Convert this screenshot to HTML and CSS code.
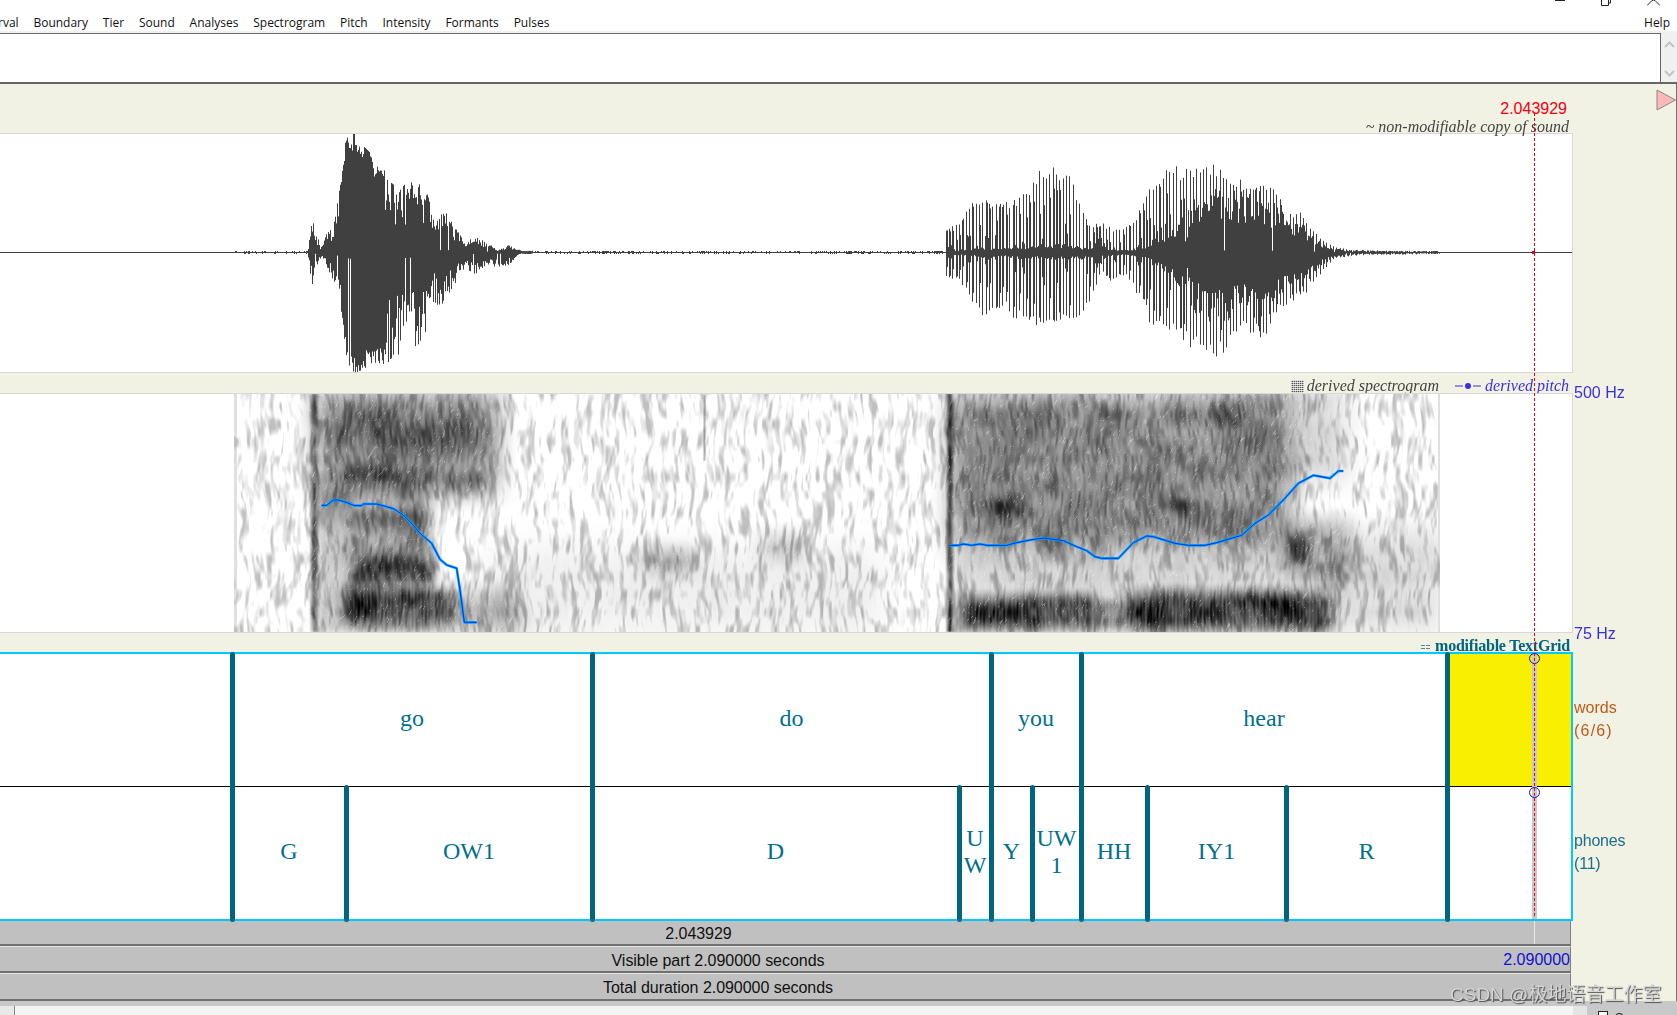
FILE: index.html
```html
<!DOCTYPE html>
<html lang="en">
<head>
<meta charset="utf-8">
<title>TextGrid editor</title>
<link rel="stylesheet" href="styles.css">
</head>
<body>
<div class="app">
  <div class="titlebar">
    <svg class="winicon" width="10" height="7" viewBox="0 0 10 7"><path d="M0 .5H10" /></svg>
    <svg class="winicon" width="10" height="7" viewBox="0 0 10 7"><path d="M.5 0V5.5H7.5V0M7.5 3H9.5V0" /></svg>
    <svg class="winicon" width="13" height="7" viewBox="0 0 13 7"><path d="M0 5.5L5 .5L6.500 0L8 .5L13 5.500" /></svg>
  </div>
  <nav class="menubar">
    <span>rval</span><span>Boundary</span><span>Tier</span><span>Sound</span><span>Analyses</span><span>Spectrogram</span><span>Pitch</span><span>Intensity</span><span>Formants</span><span>Pulses</span>
    <span class="help">Help</span>
  </nav>
  <div class="editbar">
    <div class="textbox"></div>
    <div class="vscroll">
      <svg width="11" height="7" viewBox="0 0 11 7"><path d="M1 6L5.500 1.500L10 6" /></svg>
      <svg width="11" height="7" viewBox="0 0 11 7"><path d="M1 1L5.500 5.500L10 1" /></svg>
    </div>
  </div>

  <main class="workspace">
    <header class="head">
      <div class="cursor-time">2.043929</div>
      <div class="caption dark">~ non-modifiable copy of sound</div>
    </header>
    <div class="side side-head">
      <svg width="20" height="22" viewBox="0 0 20 22"><polygon points="1,1 1,21 19.500,11" /></svg>
    </div>

    <section class="wave"><canvas id="wave" width="1572" height="238"></canvas></section>
    <div class="side"></div>

    <div class="band">
      <span class="caption dark"><i class="dither"></i>derived spectrogram</span>
      <span class="caption blue pitch-key"><svg width="26" height="8" viewBox="0 0 26 8"><path d="M0 4H8M18 4H26" /><circle cx="13" cy="4" r="3" /></svg>derived pitch</span>
    </div>
    <div class="side"></div>

    <section class="spec"><canvas id="spec" width="1572" height="238"></canvas></section>
    <div class="side side-hz"><span>500 Hz</span><span>75 Hz</span></div>

    <div class="band band-tg">
      <span class="caption teal"><svg class="tgicon" width="9" height="8" viewBox="0 0 9 8"><path d="M0 1.500H4M5 1.500H9M0 4.500H4M5 4.500H9" /></svg>modifiable TextGrid</span>
    </div>
    <div class="side"></div>

    <section class="grid">
      <div class="tier tier-words">
        <div class="iv first" style="width:232px"></div>
        <div class="iv" style="width:360px">go</div>
        <div class="iv" style="width:399px">do</div>
        <div class="iv" style="width:90px">you</div>
        <div class="iv" style="width:366px">hear</div>
        <div class="iv selected" style="width:124px"></div>
      </div>
      <div class="tier tier-phones">
        <div class="iv first" style="width:232px"></div>
        <div class="iv" style="width:114px">G</div>
        <div class="iv" style="width:246px">OW1</div>
        <div class="iv" style="width:367px">D</div>
        <div class="iv" style="width:32px">UW</div>
        <div class="iv" style="width:41px">Y</div>
        <div class="iv" style="width:49px">UW1</div>
        <div class="iv" style="width:66px">HH</div>
        <div class="iv" style="width:139px">IY1</div>
        <div class="iv" style="width:161px">R</div>
        <div class="iv" style="width:124px"></div>
      </div>
      <i class="cursor-band"></i>
      <i class="ring ring-a"></i>
      <i class="ring ring-b"></i>
    </section>
    <div class="side side-tiers">
      <div class="tier-label orange">words<br><span class="spaced">(6/6)</span></div>
      <div class="tier-label steel">phones<br>(11)</div>
    </div>

    <section class="panels">
      <div class="panel panel-cursor"><span>2.043929</span><i class="tick"></i></div>
      <div class="panel panel-mid"><span>Visible part 2.090000 seconds</span><b>2.090000</b></div>
      <div class="panel panel-mid panel-last"><span>Total duration 2.090000 seconds</span></div>
    </section>
    <div class="side"></div>

    <i class="cursor-line"></i>
  </main>

  <footer class="bottom">
    <div class="hscroll"><i class="hthumb"></i></div>
    <div class="controls">
      <i class="btn"></i>
      <label class="group"><i class="check"></i>Group</label>
    </div>
  </footer>

  <div class="watermark">CSDN @极地语音工作室</div>
</div>
<script src="script.js"></script>
</body>
</html>
```

FILE: styles.css
```css
* { box-sizing: border-box; }
html, body { margin: 0; padding: 0; background: #fff; }
body { width: 1677px; height: 1015px; overflow: hidden; font-family: "Liberation Sans", Arial, sans-serif; }
i { font-style: normal; display: block; }

.app { position: relative; width: 1677px; height: 1015px; display: flex; flex-direction: column; overflow: hidden; }

.titlebar { height: 7px; flex: none; display: flex; justify-content: flex-end; align-items: flex-start; gap: 36px; padding-right: 17px; background: #fff; }
.winicon { display: block; fill: none; stroke: #222; stroke-width: 1; }

.menubar { height: 24px; flex: none; display: flex; align-items: center; gap: 14.8px; padding-top: 6px; margin-left: -2px; font-family: "Open Sans", "Liberation Sans", sans-serif; font-size: 12px; color: #111; background: #fff; }
.menubar .help { margin-left: auto; margin-right: 7px; }

.editbar { height: 53px; flex: none; display: flex; padding-top: 2px; background: #f0f0f0; }
.textbox { width: 1661px; background: #fff; border-top: 1px solid #666; border-right: 1px solid #666; border-bottom: 2px solid #666; }
.vscroll { flex: 1; display: flex; flex-direction: column; justify-content: space-between; align-items: center; padding: 8px 0 5px; border-bottom: 2px solid #666; }
.vscroll path { fill: none; stroke: #c4c4c4; stroke-width: 2; }

.workspace { position: relative; flex: none; height: 917px; background: #f1f1e4; border-right: 1px solid #707070; display: grid; grid-template-columns: 1573px 1fr; grid-template-rows: 49px 240px 20px 240px 19px 269px 80px; }

.head { display: flex; flex-direction: column; align-items: flex-end; justify-content: flex-end; padding: 0 4px 0 0; }
.cursor-time { font-size: 16px; line-height: 18px; color: #f00010; margin: 0 2px 0 0; position: relative; top: 1px; }
.head .caption { position: relative; top: 2px; }
.caption { font-family: "Liberation Serif", serif; font-style: italic; font-size: 16px; line-height: 16px; white-space: nowrap; }
.dark { color: #444; }
.blue { color: #3a30e0; }
.teal { color: #006680; font-style: normal; font-weight: bold; letter-spacing: -.22px; }

.side-head { display: flex; justify-content: flex-end; padding-top: 5px; }
.side-head polygon { fill: #ffb8b8; stroke: #888; stroke-width: 1; }

.wave, .spec { background: #fff; border: 1px solid #d8d8d8; border-left: 0; }
.wave canvas, .spec canvas { display: block; }

.band { display: flex; justify-content: flex-end; align-items: center; gap: 16px; padding: 5px 4px 0 0; }
.band-tg { padding: 6px 3px 0 0; }
.dither { display: inline-block; vertical-align: -3px; width: 13px; height: 14px; margin-right: 3px; background: repeating-linear-gradient(90deg, rgba(255,255,255,.55) 0 1px, transparent 1px 2px), repeating-linear-gradient(0deg, #555 0 1px, #d4d4d4 1px 2px); }
.pitch-key svg { margin-right: 4px; vertical-align: 1px; }
.pitch-key path { stroke: #3a30e0; stroke-width: 1; fill: none; }
.pitch-key circle { fill: #3a30e0; }
.tgicon { display: inline-block; vertical-align: -1px; margin-right: 5px; }
.tgicon path { stroke: #4a8a9a; stroke-width: 1; fill: none; }

.side { font-size: 16px; min-width: 0; }
.side-hz { display: flex; flex-direction: column; justify-content: space-between; padding-left: 1px; margin: -10px 0 -11px; color: #3a30e0; line-height: 20px; position: relative; z-index: 1; }
.side-tiers { display: flex; flex-direction: column; padding-left: 1px; }
.tier-label { height: 133px; padding-top: 44px; line-height: 23px; }
.spaced { letter-spacing: 1.2px; }
.orange { color: #c05a1a; }
.steel { color: #1a6e8e; letter-spacing: -.2px; }

.grid { position: relative; width: 1573px; background: #fff; border-top: 2px solid #00c8ff; border-right: 2px solid #00c8ff; border-bottom: 2px solid #00c8ff; }
.tier { display: flex; height: 132px; }
.tier-words { border-bottom: 1px solid #000; height: 133px; }
.iv { position: relative; flex: none; display: flex; align-items: center; justify-content: center; text-align: center; padding: 0 3px 3px; font-family: "Liberation Serif", serif; font-size: 24px; line-height: 27px; color: #00708f; word-break: break-all; }
.iv::before { content: ""; position: absolute; left: -2px; width: 5px; top: -2px; bottom: -3px; border-radius: 2.5px; background: #006680; z-index: 2; }
.iv.first::before { display: none; }
.iv.selected { background: #f8f000; }

.cursor-band { position: absolute; left: 1532px; width: 5px; top: 0; bottom: 0; background: #c8c8c8; z-index: 1; }
.ring { position: absolute; left: 1529px; width: 11px; height: 11px; border: 1px solid #1010d0; border-radius: 50%; z-index: 3; }
.ring-a { top: -1px; }
.ring-b { top: 133px; }

.cursor-line { position: absolute; left: 1534px; top: 29px; width: 1px; height: 803px; background: repeating-linear-gradient(180deg, #f00010 0 3px, transparent 3px 5px); z-index: 4; }

.panels { width: 1571px; display: flex; flex-direction: column; position: relative; z-index: 1; }
.panel { position: relative; height: 27px; display: flex; align-items: center; justify-content: center; background: #c0c0c0; border-top: 1px solid #e4e4e4; border-right: 1px solid #808080; border-bottom: 2px solid #707070; font-size: 16px; color: #111; letter-spacing: -.04px; }
.panel:first-child { border-top: 0; height: 25px; padding-top: 3px; }
.panel-last { height: 28px; padding-top: 3px; }
.panel-cursor { padding-right: 173px; }
.panel-mid { padding-right: 134px; }
.panel b { position: absolute; right: 0; top: 4px; font-weight: normal; letter-spacing: 0; color: #1010d0; }
.panel-mid:not(.panel-last) { padding-top: 3px; }
.tick { position: absolute; left: 1534px; top: 0; bottom: 0; width: 1px; background: #e8e8e8; }

.bottom { flex: 1; display: flex; background: #c8c8c8; padding-top: 5px; }
.hscroll { width: 1573px; background: #f4f4f4; }
.hthumb { width: 15px; height: 100%; background: #e8e8e8; border-right: 1px solid #888; }
.controls { flex: 1; display: flex; gap: 11px; background: #c8c8c8; }
.btn { width: 14px; height: 100%; background: #e4e4e4; }
.group { display: flex; gap: 7px; margin-top: 5px; font-size: 11px; line-height: 12px; color: #111; }
.check { width: 10px; height: 11px; background: #fff; border: 1px solid #222; }

.watermark { position: absolute; left: 1450px; top: 983px; font-family: "Liberation Sans", "Noto Sans CJK SC", sans-serif; font-size: 19px; line-height: 24px; white-space: nowrap; color: #d4d4d4; text-shadow: 1px 1px 1px #505050; z-index: 5; }
```

FILE: script.js
```javascript
(function () {
  var seed = 12345;
  function rnd() { seed = (seed * 1664525 + 1013904223) >>> 0; return seed / 4294967296; }
  function interp(p, x) {
    if (x <= p[0][0]) return p[0][1];
    for (var i = 1; i < p.length; i++) {
      if (x <= p[i][0]) {
        var t = (x - p[i - 1][0]) / (p[i][0] - p[i - 1][0]);
        return p[i - 1][1] + t * (p[i][1] - p[i - 1][1]);
      }
    }
    return p[p.length - 1][1];
  }
  function amp(flat, ox, center, sign) {
    var out = [];
    for (var i = 0; i < flat.length; i += 2) out.push([ox + flat[i] / 3, Math.max(0, sign * (center - flat[i + 1]) / 3)]);
    return out;
  }

  /* ---------- waveform ---------- */
  var w = document.getElementById('wave').getContext('2d');
  var cy = 118;
  w.fillStyle = '#404040';
  w.fillRect(0, cy, 1572, 1);

  var u1 = amp([325,375,335,305,345,320,360,385,380,340,395,325,405,290,415,225,425,165,433,75,445,40,460,40,480,70,510,100,520,145,547,135,560,180,600,210,620,185,660,195,672,190,683,230,700,290,740,280,770,330,790,365,820,350,860,368,890,390,930,375,960,392,1000,393], 200, 397, 1);
  var l1 = amp([325,430,335,495,345,445,365,405,385,450,405,500,412,560,425,590,437,700,450,745,465,757,490,745,520,725,550,730,575,720,595,715,630,680,650,675,675,650,685,600,700,540,720,565,750,510,770,480,790,445,825,460,860,430,890,440,937,430,960,400,1000,400], 200, 397, -1);
  var x, u, l, f, g;
  for (x = 308; x < 533; x++) {
    u = interp(u1, x); l = interp(l1, x);
    var dense = x > 340 && x < 385;
    f = dense ? 0.85 + rnd() * 0.25 : 0.4 + rnd() * 0.7;
    g = dense ? 0.85 + rnd() * 0.25 : 0.4 + rnd() * 0.7;
    if (f > 1) f = 1;
    if (g > 1) g = 1;
    if (rnd() < 0.025) f = 0.05;
    if (rnd() < 0.025) g = 0.05;
    w.fillRect(x, cy - u * f, 1, u * f + l * g + 1);
  }

  var u2 = amp([80,235,120,205,160,150,190,135,250,155,300,135,340,85,370,45,400,40,440,60,470,125,490,180,510,230,545,215,580,240,610,235,640,210,665,155,690,95,720,65,780,45,880,40,915,65,1000,95,1080,125,1090,195,1140,185,1170,235,1210,270,1240,290,1300,300,1560,305], 920, 307, 1);
  var l2 = amp([80,380,120,400,160,465,190,505,250,475,300,520,370,530,440,515,480,525,510,445,545,365,570,395,610,375,640,410,665,465,700,550,760,550,830,610,885,635,910,620,960,530,1030,578,1080,470,1140,450,1170,410,1210,360,1240,325,1300,315,1560,310], 920, 307, -1);
  var coreU = [[947,0.5],[955,0.06],[1090,0.08],[1100,0.5],[1108,0.08],[1140,0.08],[1170,0.22],[1195,0.48],[1262,0.72],[1270,0.6],[1280,0.7],[1290,0.65],[1325,0.55],[1345,0.6],[1400,1]];
  for (x = 946; x < 1440; x++) {
    u = interp(u2, x); l = interp(l2, x);
    var core = interp(coreU, x);
    var phase = (x % 3.34);
    var spike = phase < 1;
    var mid = phase < 2 && x < 1190 && rnd() < 0.7;
    var shortOne = x < 1190 && rnd() < 0.22;
    f = spike ? 0.82 + rnd() * 0.18 : (mid ? 0.35 + rnd() * 0.6 : (shortOne ? 0.1 + rnd() * 0.25 : core * (0.6 + 0.7 * rnd())));
    g = spike ? 0.82 + rnd() * 0.18 : (mid ? 0.35 + rnd() * 0.6 : (shortOne ? 0.1 + rnd() * 0.25 : core * (0.6 + 0.7 * rnd())));
    if (x > 1343) { f = rnd(); g = rnd(); }
    if (f > 1) f = 1;
    if (g > 1) g = 1;
    if (!spike && rnd() < 0.03 && x > 1190) f = 0.02;
    w.fillRect(x, cy - u * f, 1, u * f + l * g + 1);
  }

  function noise(a, b, m) {
    for (var i = a; i < b; i++) {
      if (rnd() < 0.55) {
        var h = Math.round(rnd() * m);
        w.fillRect(i, cy - h, 1, h + 1 + Math.round(rnd() * m * 0.7));
      }
    }
  }
  noise(235, 308, 1);
  noise(533, 946, 1.2);
  noise(1340, 1440, 1);
  w.fillStyle = '#e00010';
  w.fillRect(1532, cy - 1, 3, 3);

  /* ---------- spectrogram ---------- */
  var c = document.getElementById('spec').getContext('2d');
  var W = 1572, H = 238, oy = 394;
  var img = c.createImageData(W, H);
  function hash(i, j) {
    var s = Math.sin(i * 127.1 + j * 311.7) * 43758.5453;
    return s - Math.floor(s);
  }
  function sm(t) { return t * t * (3 - 2 * t); }
  function vn(px, py) {
    var i = Math.floor(px), j = Math.floor(py), a = sm(px - i), b = sm(py - j);
    var v0 = hash(i, j) * (1 - a) + hash(i + 1, j) * a;
    var v1 = hash(i, j + 1) * (1 - a) + hash(i + 1, j + 1) * a;
    return v0 * (1 - b) + v1 * b;
  }
  function edge(a, b, v, s) {
    var t = Math.min(1, Math.max(0, Math.min((v - a) / s + 0.5, (b - v) / s + 0.5)));
    return sm(t);
  }
  var boxes = [
    [311,317,393,632,7,.5],[311,316,393,425,6,.35],[311,316,530,580,6,.4],
    [317,495,393,490,50,.46],[330,490,415,450,34,.3],[340,490,470,490,22,.25],
    [317,430,470,525,26,.3],
    [348,430,510,632,20,.42],[345,450,590,622,22,.62],[355,375,597,612,24,.88],
    [355,435,560,582,20,.5],[418,432,565,580,14,.45],[317,350,490,632,18,.22],
    [430,520,590,632,36,.28],[490,880,550,632,70,.07],[640,690,550,572,34,.26],
    [760,800,535,560,34,.18],[703,705,395,460,2,.3],
    [947,952,393,632,6,.66],[947,951,393,480,4,.3],
    [952,1290,393,550,50,.46],[1280,1345,393,480,50,.16],
    [960,1095,596,628,22,.72],[1125,1330,592,630,24,.72],[1240,1295,598,612,18,.5],[1095,1125,600,630,14,.3],
    [952,1340,558,632,24,.16],
    [990,1030,500,522,26,.42],[1175,1205,500,522,26,.42],[1225,1250,505,530,22,.32],
    [1290,1310,535,560,20,.5],[1040,1065,535,560,22,.3],[1090,1110,525,555,22,.25],
    [1280,1350,520,575,34,.28],[1215,1240,405,425,24,.25],[945,960,415,440,12,.25],
    [1330,1440,530,632,50,.14]
  ];
  for (var py = 0; py < H; py++) {
    var Y = py + oy;
    for (var px = 0; px < W; px++) {
      var k = (py * W + px) * 4, gray = 255;
      if (px >= 234 && px < 1440) {
        var wob = 1.6 * Math.sin(Y / 11 + px / 30);
        var n1 = vn((px + wob) / 4.4, Y / 17), n2 = vn((px + wob) / 2.2, Y / 9 + 40), n3 = vn(px / 1.5 + Y * 0.23 + 90, Y / 2.4 + px * 0.31);
        var lo = vn(px / 24 + 7, Y / 18 + 3);
        var st = Math.min(1, Math.max(0, (0.6 * n1 + 0.4 * n2 - 0.46) / 0.36));
        st = st * 0.25;
        var keep = 1;
        for (var b = 0; b < boxes.length; b++) {
          var B = boxes[b], s = B[4];
          if (px < B[0] - s || px > B[1] + s || Y < B[2] - s || Y > B[3] + s) continue;
          keep *= 1 - B[5] * edge(B[0], B[1], px, s) * edge(B[2], B[3], Y, s);
        }
        var E = 1 - keep;
        E *= (0.84 + 0.32 * n2) * (0.78 + 0.44 * lo);
        if (Y > 580 && ((px > 350 && px < 450) || (px > 955 && px < 1340))) E *= 0.95 + 0.05 * Math.sin(px * 1.88);
        if (n3 > 0.8 && E > 0.15 && E < 0.8) E *= 1 - (n3 - 0.8) * 2.2;
        var D = 1 - (1 - st) * (1 - Math.min(1, E));
        if (px < 237 || px > 1437) D = Math.max(D, 0.12);
        gray = Math.round(255 * (1 - D));
      }
      img.data[k] = img.data[k + 1] = img.data[k + 2] = gray;
      img.data[k + 3] = 255;
    }
  }
  c.putImageData(img, 0, 0);

  /* ---------- pitch ---------- */
  function path(ox, flat) {
    c.beginPath();
    for (var i = 0; i < flat.length; i += 2) {
      var X = ox + flat[i] / 3, Yy = 390 + flat[i + 1] / 3 - oy;
      if (i) c.lineTo(X, Yy); else c.moveTo(X, Yy);
    }
    c.stroke();
  }
  var p1 = [305,346,320,346,340,330,355,330,375,336,405,347,425,347,430,342,470,342,500,350,520,356,550,375,575,400,600,430,635,460,660,508,680,525,710,535,720,600,733,697,770,697];
  var p2 = [60,466,85,466,100,462,125,466,150,462,170,466,230,466,260,458,300,450,340,444,400,452,440,470,470,482,495,500,515,505,565,505,610,458,650,438,670,440,735,460,775,466,825,466,860,458,935,436,975,400,1015,375,1060,330,1105,280,1150,256,1200,265,1225,243,1240,243];
  [[ '#00a8ff', 2.6 ], [ '#0030e0', 1 ]].forEach(function (s) {
    c.strokeStyle = s[0]; c.lineWidth = s[1]; c.lineJoin = 'round';
    path(220, p1);
    path(930, p2);
  });
})();
```
